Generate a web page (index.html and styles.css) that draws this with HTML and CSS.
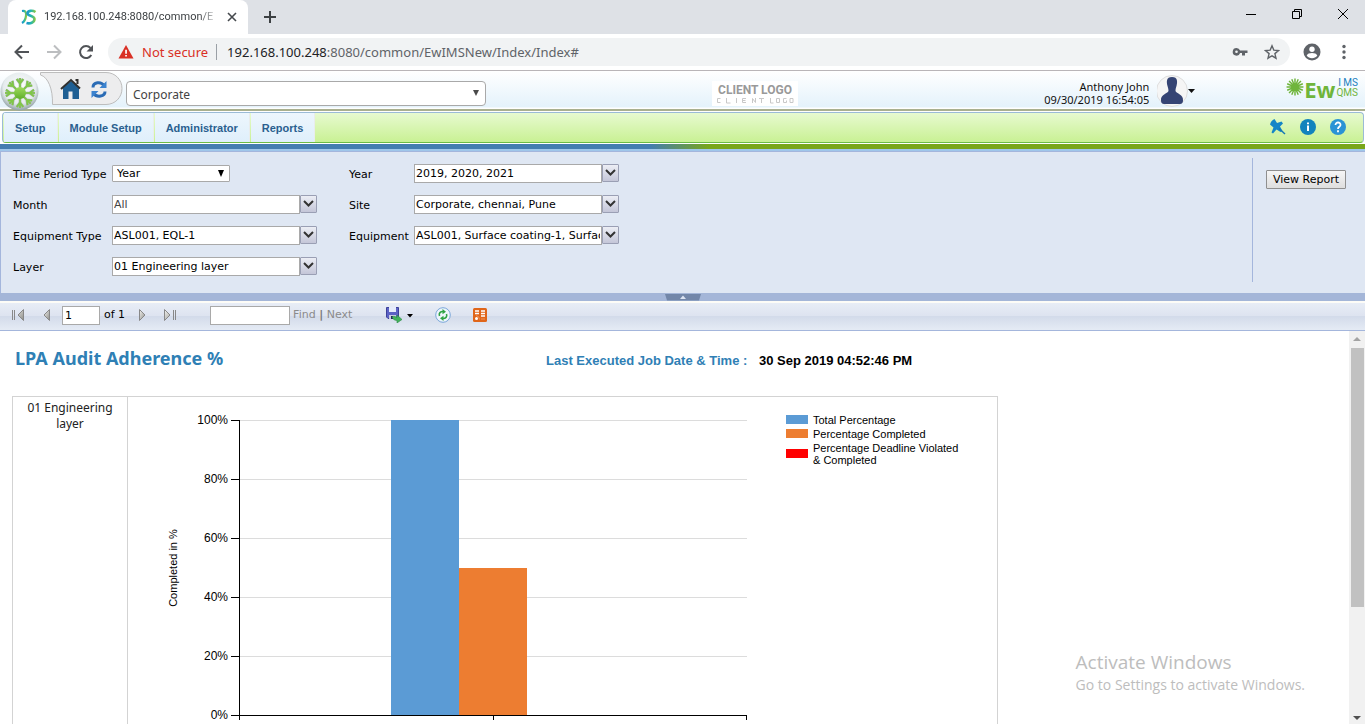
FILE: index.html
```html
<!DOCTYPE html>
<html lang="en">
<head>
<meta charset="utf-8">
<title>LPA Audit Adherence</title>
<link rel="stylesheet" href="styles.css">
</head>
<body>
<svg class="defs" aria-hidden="true">
  <defs>
    <linearGradient id="leaf" x1="0" y1="0" x2="0" y2="1"><stop offset="0" stop-color="#9fdc5c"/><stop offset="1" stop-color="#5fae2b"/></linearGradient>
    <radialGradient id="orb" cx=".5" cy=".4" r=".6"><stop offset="0" stop-color="#fff"/><stop offset=".7" stop-color="#e6ecee"/><stop offset="1" stop-color="#8e9fa3"/></radialGradient>
    <linearGradient id="metal" x1="0" y1="0" x2="1" y2="1"><stop offset="0" stop-color="#f4f4f0"/><stop offset="1" stop-color="#8c8c88"/></linearGradient>
    <linearGradient id="swirl" x1="0" y1="0" x2="1" y2="0"><stop offset="0" stop-color="#1b8fd0"/><stop offset=".5" stop-color="#22b8b0"/><stop offset="1" stop-color="#8cc63f"/></linearGradient>
    <g id="ray" fill="none"><path d="M0-2V-15M0-9.500l-3.300-4.500M0-9.500l3.300-4.500"/></g>
    <g id="flake">
      <use href="#ray"/><use href="#ray" transform="rotate(45)"/><use href="#ray" transform="rotate(90)"/><use href="#ray" transform="rotate(135)"/>
      <use href="#ray" transform="rotate(180)"/><use href="#ray" transform="rotate(225)"/><use href="#ray" transform="rotate(270)"/><use href="#ray" transform="rotate(315)"/>
    </g>
    <g id="burst"><path d="M0-15V15M-15 0H15M-10.600-10.600L10.600 10.600M-10.600 10.600L10.600-10.600M-5.700-13.900L5.700 13.900M-13.900-5.700L13.900 5.700M-13.900 5.700L13.900-5.700M-5.700 13.900L5.700-13.900"/></g>
  </defs>
</svg>

<div class="tabstrip">
  <div class="tab">
    <svg width="16" height="16" viewBox="0 0 16 16" fill="none" stroke="url(#swirl)"><path d="M1 2c3.500-.5 4.500 1 4 5s-1.500 5.500-4 7" stroke-width="2.200"/><path d="M14.500 3c-3-2-8-1.500-8 1.500 0 2.500 7 2 7 5.500s-4.500 5-8 4" stroke-width="2.600"/><path d="M6 8h7" stroke-width="1.500"/></svg>
    <span class="tab-title">192.168.100.248:8080/common/E</span>
    <button class="plain" aria-label="Close tab"><svg width="10" height="10" viewBox="0 0 10 10" stroke="#45494d" stroke-width="1.600"><path d="M1 1l8 8M9 1L1 9"/></svg></button>
  </div>
  <button class="plain newtab" aria-label="New tab"><svg width="14" height="14" viewBox="0 0 14 14" stroke="#3c4043" stroke-width="2"><path d="M7 1v12M1 7h12"/></svg></button>
  <div class="window-buttons">
    <button class="plain" aria-label="Minimize"><svg width="12" height="12" viewBox="0 0 12 12" stroke="#000"><path d="M1 6.500h10"/></svg></button>
    <button class="plain" aria-label="Restore"><svg width="12" height="12" viewBox="0 0 12 12" fill="none" stroke="#000"><path d="M1.500 3.500h7v7h-7zM3.500 3.500v-2h7v7h-2"/></svg></button>
    <button class="plain" aria-label="Close"><svg width="12" height="12" viewBox="0 0 12 12" stroke="#000"><path d="M1 1l10 10M11 1L1 11"/></svg></button>
  </div>
</div>

<div class="browserbar">
  <button class="plain" aria-label="Back"><svg width="16" height="16" viewBox="0 0 16 16" fill="none" stroke="#505357" stroke-width="2"><path d="M15 8H2M8 1.500L1.500 8 8 14.500"/></svg></button>
  <button class="plain" aria-label="Forward"><svg width="16" height="16" viewBox="0 0 16 16" fill="none" stroke="#bcbec0" stroke-width="2"><path d="M1 8h13M8 1.500L14.500 8 8 14.500"/></svg></button>
  <button class="plain" aria-label="Reload"><svg width="16" height="16" viewBox="0 0 16 16"><path d="M13.300 11A6 6 0 1 1 12.500 4" fill="none" stroke="#505357" stroke-width="2"/><path d="M15 1v6.500H8.500z" fill="#505357"/></svg></button>
  <div class="omnibox">
    <svg width="16" height="14" viewBox="0 0 16 14"><path d="M8 0l7.500 13.500H.5z" fill="#d93025"/><path d="M7.200 4.800h1.700v4H7.200zM7.200 10h1.700v1.600H7.200z" fill="#fff"/></svg>
    <span class="not-secure">Not secure</span>
    <span class="url"><b>192.168.100.248</b>:8080/common/EwIMSNew/Index/Index#</span>
    <svg width="16" height="16" viewBox="0 0 16 16"><path d="M4.500 4a3.800 3.800 0 1 0 3.600 5H10v2.500h3V9h2.500V6.500H8.100A3.800 3.800 0 0 0 4.500 4zm0 2.400a1.300 1.300 0 1 1 0 2.700 1.300 1.300 0 0 1 0-2.700z" fill="#5f6368"/></svg>
    <svg width="16" height="16" viewBox="0 0 16 16"><path d="M8 1.800l1.800 4.300 4.700.4-3.600 3.100 1.100 4.600L8 11.800l-4 2.400 1.100-4.600L1.500 6.500l4.700-.4z" fill="none" stroke="#5f6368" stroke-width="1.400"/></svg>
  </div>
  <svg class="account" width="18" height="18" viewBox="0 0 18 18"><circle cx="9" cy="9" r="8.500" fill="#5f6368"/><circle cx="9" cy="6.300" r="2.700" fill="#fff"/><path d="M3.700 12.500c1-3.300 9.600-3.300 10.600 0-2.300 3.600-8.300 3.600-10.600 0z" fill="#fff"/></svg>
  <svg width="4" height="16" viewBox="0 0 4 16" fill="#5f6368"><circle cx="2" cy="2.500" r="1.700"/><circle cx="2" cy="8" r="1.700"/><circle cx="2" cy="13.500" r="1.700"/></svg>
</div>

<header class="appbar">
  <div class="home-group">
    <svg width="124" height="40" viewBox="0 0 124 40">
      <path d="M40.500 1.500H106c9 0 16 7 16 16s-7 16-16 16H52.500C53 18 48 6 40.500 4z" fill="#ededee" stroke="#bdbdbd"/>
      <circle cx="19.500" cy="20.500" r="19" fill="url(#orb)"/>
      <g transform="translate(20 22)"><g stroke="#9db39a" stroke-width="2.600"><use href="#flake"/></g><g stroke="#7fc844" stroke-width="1.500"><use href="#flake"/></g><circle r="6" fill="url(#leaf)"/></g>
      <path d="M63 16.500V28h5.500v-7.500h4V28H79V16.500l-8-6.500z" fill="#1f5f93"/>
      <path d="M61 18l10-9 9 8.500M75.500 9h2v4" fill="none" stroke="#30302f" stroke-width="2"/>
      <g transform="translate(91 10)" fill="none" stroke="#2b6cb5" stroke-width="3"><path d="M2 6.500C2 1 10 0 13 4.500M14 10.500c0 5-8 6.500-11.500 2"/><path d="M15.500 0v7h-7zM.5 17v-7h7z" fill="#3c83cf" stroke="none"/></g>
    </svg>
  </div>
  <div class="select-box site-select">
    <select aria-label="Site"><option>Corporate</option></select>
    <svg width="6" height="6" viewBox="0 0 6 6"><path d="M0 0h6L3 6z" fill="#4a4a4a"/></svg>
  </div>
  <div class="client-logo"><span>CLIENT LOGO</span><svg width="78" height="8" viewBox="0 0 78 8" fill="none" stroke="#c8c8c8" aria-hidden="true"><path d="M4.500 1.500h-3v4h3M10.500 1v5h4M20.500 1v5M30 1.500h-3.500v4H30M26.500 3.500h3M36.500 6V1.500l3 4V1M43 1.500h5M45.500 1.500V6M54.500 1v5h3M63.500 1.500h-3v4h3zM70.500 1.500h-3v4h3v-2M77 1.500h-3v4h3z"/></svg></div>
  <div class="user">
    <div class="user-text">Anthony John<br>09/30/2019 16:54:05</div>
    <svg width="38" height="34" viewBox="0 0 38 34"><circle cx="15" cy="17" r="15.500" fill="#f5f5f5" stroke="#dedede"/><path d="M15 3c6 0 5.500 5 4.500 9-.6 2-1 3-1 5 1 3 8 3 7.500 9.500 0 2-1 3.500-3 3.500H7c-2 0-3-1.500-3-3.500C3.500 20 10.500 20 11.500 17c0-2-.5-3-1-5C9.500 8 9 3 15 3z" fill="#354474"/><path d="M31 15h7l-3.500 4z" fill="#111"/></svg>
  </div>
  <div class="brand">
    <svg width="18" height="18" viewBox="-16 -16 32 32" stroke="#6fb53b" stroke-width="2.600"><use href="#burst"/></svg>
    <span class="brand-ew">Ew</span>
    <span class="brand-stack"><span class="ims">I MS</span><span>QMS</span></span>
  </div>
</header>

<nav class="menubar">
  <a href="#">Setup</a><a href="#">Module Setup</a><a href="#">Administrator</a><a href="#">Reports</a>
  <div class="menu-icons">
    <svg width="16" height="16" viewBox="0 0 16 16"><path d="M0 5.500C.5 3 2 1 4.500 0l2.500 4 4.500-1.500 1.500 2-3 3 2.500 4.500-2 1-4-2.500-3.500 4-1.500-1 2-5z" fill="#1486c7"/><path d="M9 9.500l6 5.500" stroke="#1478b5" stroke-width="1.500"/></svg>
    <svg width="16" height="16" viewBox="0 0 16 16"><circle cx="8" cy="8" r="8" fill="#1283bd"/><path d="M7 6.500h2V12H7zM7 3.500h2v1.800H7z" fill="#fff"/></svg>
    <svg width="16" height="16" viewBox="0 0 16 16"><circle cx="8" cy="8" r="8" fill="#2a93d5"/><path d="M5.500 6c0-3.500 5.200-3.200 5 0-.2 2-2.500 1.700-2.500 4M8 11.300v2" stroke="#fff" stroke-width="1.800" fill="none"/></svg>
  </div>
</nav>
<div class="stripe"></div>

<form class="params">
  <div class="fields">
    <label for="period">Time Period Type</label>
    <div class="select-box period-select"><select id="period"><option>Year</option></select><svg width="6" height="7" viewBox="0 0 6 7"><path d="M0 0h6L3 7z"/></svg></div>
    <label for="year">Year</label>
    <div class="combo"><input id="year" value="2019, 2020, 2021"><button type="button" aria-label="Open Year"><svg width="11" height="8" viewBox="0 0 11 8"><path d="M1 1l4.500 4.500L10 1"/></svg></button></div>
    <label for="month">Month</label>
    <div class="combo"><input id="month" class="dim" value="All"><button type="button" aria-label="Open Month"><svg width="11" height="8" viewBox="0 0 11 8"><path d="M1 1l4.500 4.500L10 1"/></svg></button></div>
    <label for="site">Site</label>
    <div class="combo"><input id="site" value="Corporate, chennai, Pune"><button type="button" aria-label="Open Site"><svg width="11" height="8" viewBox="0 0 11 8"><path d="M1 1l4.500 4.500L10 1"/></svg></button></div>
    <label for="eqtype">Equipment Type</label>
    <div class="combo"><input id="eqtype" value="ASL001, EQL-1"><button type="button" aria-label="Open Equipment Type"><svg width="11" height="8" viewBox="0 0 11 8"><path d="M1 1l4.500 4.500L10 1"/></svg></button></div>
    <label for="equip">Equipment</label>
    <div class="combo"><input id="equip" value="ASL001, Surface coating-1, Surface coating-2"><button type="button" aria-label="Open Equipment"><svg width="11" height="8" viewBox="0 0 11 8"><path d="M1 1l4.500 4.500L10 1"/></svg></button></div>
    <label for="layer">Layer</label>
    <div class="combo"><input id="layer" value="01 Engineering layer"><button type="button" aria-label="Open Layer"><svg width="11" height="8" viewBox="0 0 11 8"><path d="M1 1l4.500 4.500L10 1"/></svg></button></div>
  </div>
  <div class="submit"><button type="button">View Report</button></div>
</form>
<div class="splitter"><button class="plain" aria-label="Collapse parameters"><svg width="36" height="7" viewBox="0 0 36 7"><path d="M0 0h36l-2 6.500H2z" fill="#7387a9"/><path d="M18 1.500l3 3.500h-6z" fill="#dce4f2"/></svg></button></div>

<div class="toolbar">
  <button class="plain first" aria-label="First page"><svg width="12" height="12" viewBox="0 0 12 12" fill="url(#metal)" stroke="#888"><path d="M.5 1v10M2.500 1v10M11.500.5v11L6 6z"/></svg></button>
  <button class="plain prev" aria-label="Previous page"><svg width="7" height="12" viewBox="0 0 7 12" fill="url(#metal)" stroke="#888"><path d="M6.500.5v11L1 6z"/></svg></button>
  <input class="page-no" aria-label="Page" value="1">
  <span class="of">of 1</span>
  <button class="plain next" aria-label="Next page"><svg width="7" height="12" viewBox="0 0 7 12" fill="url(#metal)" stroke="#888"><path d="M.5.5v11L6 6z"/></svg></button>
  <button class="plain last" aria-label="Last page"><svg width="12" height="12" viewBox="0 0 12 12" fill="url(#metal)" stroke="#888"><path d="M.5.5v11L6 6zM9.500 1v10M11.500 1v10"/></svg></button>
  <input class="find-text" aria-label="Find text">
  <span class="find"><a href="#">Find</a> <b>|</b> <a href="#">Next</a></span>
  <button class="plain export" aria-label="Export"><svg width="27" height="16" viewBox="0 0 27 16"><path d="M.5.500h12v11H2L.5 10z" fill="#5c62c4" stroke="#3d419a"/><path d="M3 0h7v5H3z" fill="#e6ecfb"/><path d="M3 8h7v4H3z" fill="#c9cce0"/><path d="M5 9h2v3H5z" fill="#23265f"/><path d="M6 10c2-1.500 4 0 5 .5V8l5 4.500-5 3.500v-2.500c-2 0-4-1-5-3.500z" fill="#43b35c" stroke="#2c8c43" stroke-width=".6"/><path d="M21 7h6l-3 3.500z"/></svg></button>
  <button class="plain refresh" aria-label="Refresh"><svg width="16" height="16" viewBox="0 0 16 16" fill="none"><circle cx="8" cy="8" r="7.300" fill="#eef5fd" stroke="#7ba7d9"/><path d="M4.500 9C3.500 6 5.500 4.500 8 4.500M11.500 7c1 3-1 4.500-3.500 4.500" stroke="#2fa345" stroke-width="1.600"/><path d="M7.500 2l3.500 2.700-3.500 2.600zM8.500 14L5 11.300l3.500-2.600z" fill="#2fa345"/></svg></button>
  <button class="plain" aria-label="Data feed"><svg width="14" height="14" viewBox="0 0 14 14"><rect width="14" height="14" rx="1.500" fill="#e0661a"/><path d="M2 3h4M8 3h4M2 5.500h4M8 5.500h4M8 8h4" stroke="#fff" stroke-width="1.300"/><circle cx="3.500" cy="10.500" r="1.500" fill="#fff"/><path d="M3 7.500q3.500.5 3.500 4M8 11h4" fill="none" stroke="#f0935a"/></svg></button>
</div>

<main class="report-view">
  <div class="report">
    <div class="report-head">
      <h1>LPA Audit Adherence %</h1>
      <p><span>Last Executed Job Date &amp; Time :</span> 30 Sep 2019 04:52:46 PM</p>
    </div>
    <table>
      <tr>
        <th>01 Engineering layer</th>
        <td>
          <svg class="chart" width="869" height="360" viewBox="0 0 869 360">
            <path class="grid" d="M112 23.500h507M112 82.500h507M112 141.500h507M112 200.500h507M112 259.500h507"/>
            <rect x="263" y="23" width="68" height="295" fill="#5b9bd5"/>
            <rect x="331" y="171" width="68" height="147" fill="#ed7d31"/>
            <path class="axis" d="M111.500 23v300M103 318.500h516M103 23.500h8M103 82.500h8M103 141.500h8M103 200.500h8M103 259.500h8M365.500 318v5M618.500 318v5"/>
            <g class="ticks"><text x="100" y="27">100%</text><text x="100" y="86">80%</text><text x="100" y="145">60%</text><text x="100" y="204">40%</text><text x="100" y="263">20%</text><text x="100" y="322">0%</text></g>
            <text class="axis-title" transform="translate(49 171) rotate(-90)">Completed in %</text>
            <g class="legend">
              <rect x="658" y="18" width="22" height="9" fill="#5b9bd5"/><text x="685" y="27">Total Percentage</text>
              <rect x="658" y="32" width="22" height="9" fill="#ed7d31"/><text x="685" y="41">Percentage Completed</text>
              <rect x="658" y="52" width="22" height="9" fill="#f00"/><text x="685" y="55">Percentage Deadline Violated</text><text x="685" y="67">&amp; Completed</text>
            </g>
          </svg>
        </td>
      </tr>
    </table>
  </div>
  <div class="scrollbar">
    <svg width="16" height="17" viewBox="0 0 16 17"><path d="M4 10h8L8 6z" fill="#a3a3a3"/></svg>
    <div class="thumb"></div>
    <svg width="16" height="17" viewBox="0 0 16 17"><path d="M4 9h8l-4 4z" fill="#505050"/></svg>
  </div>
  <div class="watermark"><strong>Activate Windows</strong>Go to Settings to activate Windows.</div>
</main>
</body>
</html>
```
FILE: styles.css
```css
* { box-sizing: border-box; }
body {
  margin: 0;
  height: 100vh;
  display: flex;
  flex-direction: column;
  overflow: hidden;
  background: #fff;
  font: 11px/16px "DejaVu Sans", Verdana, sans-serif;
  color: #000;
}
svg { display: block; flex: none; }
.defs { position: absolute; width: 0; height: 0; }
.plain { border: 0; padding: 0; background: none; display: block; flex: none; }

/* Browser frame */
.tabstrip { display: flex; height: 34px; flex: none; background: #dee1e6; padding-left: 8px; }
.tab {
  width: 240px;
  display: flex;
  align-items: center;
  gap: 7px;
  padding: 0 11px 0 13px;
  background: #fff;
  border-radius: 8px 8px 0 0;
}
.tab-title {
  flex: 1;
  white-space: nowrap;
  font: 11px/16px Roboto, sans-serif;
  color: #3c4043;
  -webkit-mask-image: linear-gradient(to right, #000 88%, transparent);
  mask-image: linear-gradient(to right, #000 88%, transparent);
}
.newtab { margin-left: 15px; }
.window-buttons { margin-left: auto; display: flex; gap: 34px; padding: 8px 16px 14px 0; }
.browserbar {
  display: flex;
  align-items: center;
  gap: 16px;
  height: 37px;
  flex: none;
  padding: 0 19px 0 14px;
  border-bottom: 1px solid #b9b5b8;
}
.omnibox {
  flex: 1;
  display: flex;
  align-items: center;
  height: 28px;
  margin: 0 -3px 0 -2px;
  padding: 0 10px;
  border-radius: 14px;
  background: #f1f3f4;
  font: 13px/20px "Noto Sans", sans-serif;
  gap: 16px;
}
.not-secure { color: #d93025; margin-left: -8px; padding-right: 8px; border-right: 1px solid #9aa0a6; line-height: 16px; }
.url { flex: 1; margin-left: -6px; color: #5f6368; }
.url b { font-weight: 400; color: #202124; }
.account { margin-right: 5px; }

/* Application header */
.appbar {
  display: flex;
  height: 40px;
  flex: none;
  background: linear-gradient(#fff, #e4f2fb 36px, #fff 37px);
  border-bottom: 2px solid #a9b08f;
}
.home-group { width: 126px; height: 38px; }
.home-group svg { position: relative; z-index: 1; }
.select-box { position: relative; }
.select-box select { appearance: none; width: 100%; height: 100%; border: 1px solid #a9a9a9; background: #fff; color: #000; }
.select-box svg { position: absolute; top: 50%; margin-top: -4px; pointer-events: none; }
.site-select { width: 360px; height: 25px; margin-top: 10px; }
.site-select select { border-radius: 4px; padding: 2px 6px 0; font: 12px/16px "Noto Sans", sans-serif; color: #444; }
.site-select svg { right: 7px; }
.client-logo {
  width: 86px;
  height: 25px;
  margin: 10px auto 0 226px;
  display: flex;
  flex-direction: column;
  align-items: center;
  padding-top: 3px;
  background: #fff;
  color: #999;
  font: 700 12px/13px Roboto, sans-serif;
}
.user { display: flex; gap: 8px; padding-top: 3px; }
.user-text { padding-top: 6px; font: 11px/13px "Noto Sans", sans-serif; text-align: right; color: #111; }
.brand { display: flex; margin: 7px 7px 0 91px; color: #6fb53b; }
.brand-ew { font: 700 22px/22px "Noto Sans", sans-serif; margin: 0 1px 0 0; }
.brand-stack { display: flex; flex-direction: column; align-items: flex-end; font: 10px/10px Roboto, sans-serif; }
.ims { color: #1b7fc0; }

.menubar {
  display: flex;
  gap: 1px;
  height: 31px;
  flex: none;
  margin: 1px 1px 0 2px;
  padding-left: 1px;
  border: 1px solid #9bbbd6;
  border-bottom-color: #6cbb45;
  border-radius: 4px;
  background: linear-gradient(#e7fad0, #c9f194);
}
.menubar a {
  padding: 0 11px;
  background: linear-gradient(#edf6fd, #dfeffb);
  border-right: 1px solid #e9ecec;
  font: 700 11px/30px "Liberation Sans", Arial, sans-serif;
  color: #2a5f8f;
  text-decoration: none;
}
.menu-icons { margin-left: auto; display: flex; gap: 14px; padding: 6px 17px 0 0; }
.stripe {
  height: 8px;
  flex: none;
  border-top: 1px solid #fff;
  border-bottom: 2px solid #9fc6ea;
  background: linear-gradient(to right, #447db0 650px, #79a619 710px);
}

/* Report parameters */
.params { display: flex; flex: none; background: #dfe7f3; border-left: 1px solid #a4b6dc; border-top: 1px solid #a4b6dc; padding: 6px 0 11px 12px; }
.fields { display: grid; grid-template-columns: 99px 237px 65px 205px; grid-auto-rows: 31px; align-items: center; flex: 1; }
.fields label { padding-top: 2px; }
.period-select { width: 118px; height: 17px; }
.period-select select { padding: 0 4px; border-radius: 1px; font: inherit; line-height: 15px; }
.period-select svg { right: 6px; }
.combo { display: flex; width: 205px; height: 19px; }
.combo input { width: 188px; border: 1px solid #a9a9a9; padding: 1px 1px 0; font: inherit; }
.combo input.dim { color: #444; }
.combo button {
  width: 17px;
  height: 18px;
  padding: 0 0 0 2px;
  border: 1px solid #9a9fb4;
  border-radius: 1px;
  background: linear-gradient(#eceef5, #c4c6d8);
}
.combo button svg { fill: none; stroke: #333; stroke-width: 2; }
.submit { width: 113px; border-left: 1px solid #a4b6dc; padding: 12px 13px; }
.submit button {
  width: 80px;
  height: 19px;
  padding: 0;
  border: 1px solid #8f8f8f;
  border-radius: 1px;
  background: linear-gradient(#f6f6f6, #dedede);
  font: inherit;
}
.splitter { height: 8px; flex: none; background: #a4b6d8; display: flex; justify-content: center; }

.toolbar {
  display: flex;
  align-items: center;
  height: 30px;
  flex: none;
  padding: 0 12px 3px;
  border-top: 2px solid #fdfcf7;
  border-bottom: 1px solid #a4b6dc;
  background: linear-gradient(#e8edf6, #dde3f0 50%, #d3dbea 50%, #e5ebf5);
}
.toolbar input { border: 1px solid #a9a9a9; height: 19px; padding: 0 2px; font: inherit; }
.prev { margin: 0 12px 0 19px; }
.page-no { width: 38px; }
.of { margin: 0 14px 0 4px; }
.last { margin: 0 34px 0 18px; }
.find-text { width: 80px; }
.find { margin: 0 34px 0 3px; color: #777; }
.find a { color: #8b8b8b; text-decoration: none; }
.refresh { margin: 0 22px; }

/* Report body */
.report-view { flex: 1; min-height: 0; display: flex; position: relative; }
.report { flex: 1; min-width: 0; overflow: hidden; padding: 16px 12px 0; }
.report-head { display: flex; height: 49px; }
h1 { width: 534px; margin: 0; padding-left: 3px; font: 700 18px/22px "Noto Sans", sans-serif; color: #2f80b5; }
.report-head p { margin: 6px 0 0; font: 700 13px/16px "Liberation Sans", Arial, sans-serif; white-space: pre; }
.report-head span { color: #2f80b5; margin-right: 8px; }
table { border-collapse: collapse; }
th, td { border: 1px solid #d3d3d3; padding: 0; vertical-align: top; }
th { width: 115px; padding: 3px 10px; font: 12px/16px "Noto Sans", sans-serif; color: #222; }
.grid { stroke: #dcdcdc; }
.axis { stroke: #000; }
.ticks, .legend, .axis-title { font: 12px "Liberation Sans", Arial, sans-serif; }
.ticks { text-anchor: end; }
.axis-title { text-anchor: middle; font-size: 11px; }
.legend { font-size: 11px; }
.scrollbar { width: 16px; flex: none; display: flex; flex-direction: column; background: #f1f1f1; }
.thumb { height: 66%; margin: 0 1px 0 2px; background: #c1c1c1; }
.scrollbar svg:last-child { margin-top: auto; }
.watermark { position: absolute; right: 60px; bottom: 28px; font: 14px/22px "Open Sans", sans-serif; color: #bdbdbd; }
.watermark strong { display: block; font-weight: 400; font-size: 19px; line-height: 24px; }
```
